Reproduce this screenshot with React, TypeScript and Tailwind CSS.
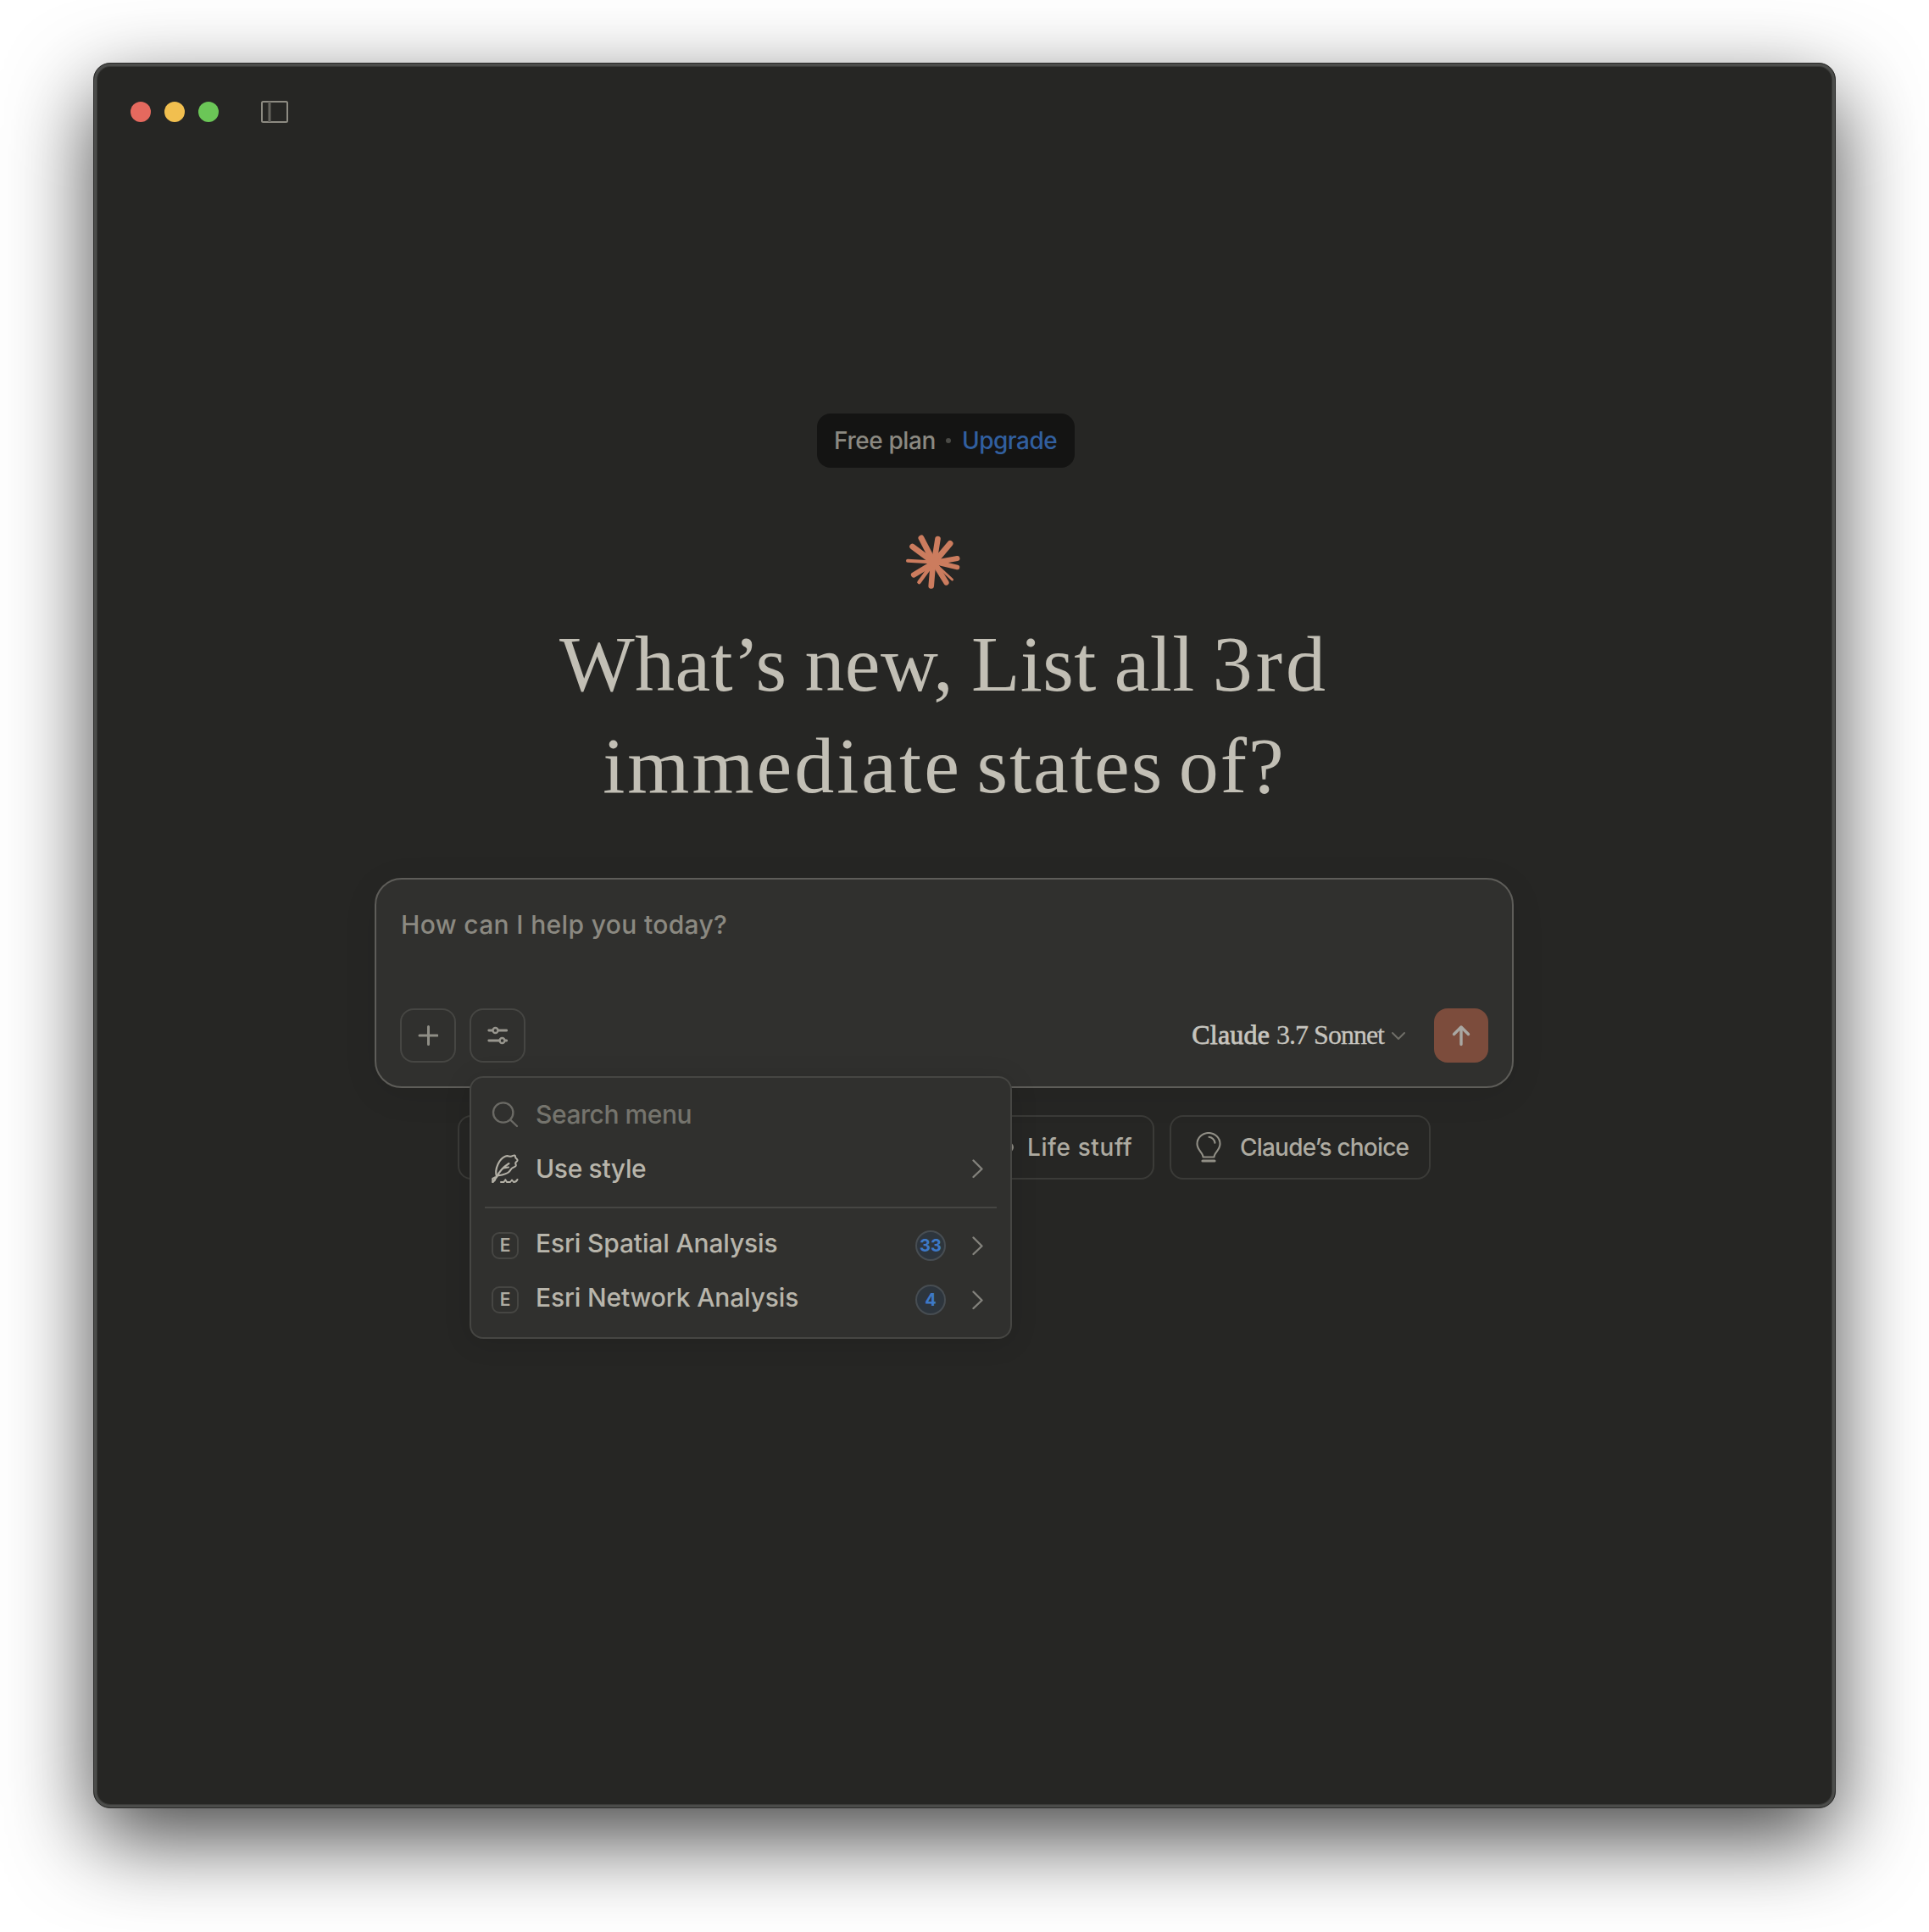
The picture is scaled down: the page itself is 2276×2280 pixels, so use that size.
import React from "react";

const sans = "font-['Inter',sans-serif]";
const serif = "font-['Liberation_Serif',serif]";

function SidebarIcon() {
  return (
    <svg className="h-7 w-8" viewBox="0 0 32 28" fill="none" stroke="#8d8b82" strokeWidth="2">
      <rect x="1" y="2" width="30" height="24" rx="1.5" />
      <path d="M10 2v24" stroke="#66655f" strokeWidth="3" />
    </svg>
  );
}

function Starburst() {
  return (
    <svg className="h-[66px] w-[66px]" viewBox="0 0 66 66" stroke="#cc7c5e" strokeLinecap="round">
      <path d="M34 34L19 5" strokeWidth="7" />
      <path d="M34 34L38.5 6" strokeWidth="6.6" />
      <path d="M34 34L53 11.500" strokeWidth="7" />
      <path d="M34 34L61.500 29" strokeWidth="6" />
      <path d="M34 33L61.500 39.500" strokeWidth="5.500" />
      <path d="M34 34L55.500 54" strokeWidth="3" />
      <path d="M34 34L48.500 57.500" strokeWidth="6.200" />
      <path d="M33 34L30.700 61.500" strokeWidth="6.600" />
      <path d="M34 33L16.500 57" strokeWidth="4.600" />
      <path d="M34 34L10 48.500" strokeWidth="6.200" />
      <path d="M34 33.500L3 31.800" strokeWidth="4" />
      <path d="M34 34L8.500 15" strokeWidth="6.600" />
      <circle cx="34" cy="33.500" r="6" fill="#cc7c5e" />
    </svg>
  );
}

function PlusIcon() {
  return (
    <svg className="h-6 w-6" viewBox="0 0 24 24" stroke="#8f8e86" strokeWidth="3" strokeLinecap="round">
      <path d="M12.500 1.500v21M2 12h21" />
    </svg>
  );
}

function SlidersIcon() {
  return (
    <svg className="h-6 w-6" viewBox="0 0 24 24" fill="none" stroke="#98968e" strokeWidth="2.900" strokeLinecap="round">
      <path d="M1.800 6h4M13 6h9.700M1.800 18h12.500M21.500 18h1.200" />
      <circle cx="9.500" cy="6" r="3" strokeWidth="2.300" />
      <circle cx="17.500" cy="18" r="3" strokeWidth="2.300" />
    </svg>
  );
}

function ArrowUpIcon() {
  return (
    <svg className="h-[26px] w-6" viewBox="0 0 24 26" fill="none" stroke="#a9a7a2" strokeWidth="3.400" strokeLinecap="round" strokeLinejoin="round">
      <path d="M12 23.500V3M3.500 11.500L12 3l8.500 8.500" />
    </svg>
  );
}

function ChevronDown() {
  return (
    <svg className="h-[11px] w-[18px]" viewBox="0 0 18 11" fill="none" stroke="#6f6e68" strokeWidth="2" strokeLinecap="round" strokeLinejoin="round">
      <path d="M2 2l7 7 7-7" />
    </svg>
  );
}

function ChevronRight() {
  return (
    <svg className="h-6 w-4" viewBox="0 0 16 24" fill="none" stroke="#83827c" strokeWidth="2.400" strokeLinecap="round" strokeLinejoin="round">
      <path d="M3.500 2.500L13.500 12.500 3.500 22" />
    </svg>
  );
}

function SearchIcon() {
  return (
    <svg className="h-8 w-8" viewBox="0 0 32 32" fill="none" stroke="#6b6a65" strokeWidth="2.300" strokeLinecap="round">
      <circle cx="13.700" cy="14" r="11.700" />
      <path d="M22.300 22.600l7.700 7.400" />
    </svg>
  );
}

function QuillIcon() {
  return (
    <svg className="h-9 w-8" viewBox="0 0 32 36" fill="none" stroke="#b3b0a6" strokeWidth="2.100" strokeLinecap="round" strokeLinejoin="round">
      <path d="M1.500 34L6 28C3 18 9.500 6 16.500 3.500c2.500-1 4 .3 6 .2 2.200-.1 3.500-1.700 4.700-1.200 1.200.5.400 2 1.300 3 1.500 1.500 2.300 1.500 2 3-.4 1.500-2.300 1.800-2.300 3.300s1.200 1.700.3 3.200c-1 1.500-3 1.500-4.300 2.500-1.500 1-2 3-3.700 4.500-3 2.800-8.500 3.600-13.500 4.500" />
      <path d="M6 28C9 21.500 13.500 16.500 20.500 12M14 17.500l6-1" />
      <path d="M1.200 34v-4l3.300-1.800-.5 3.500zM11 34h3.500l1.800-2.800 1.700 2.800h4l2-2.500 2 2.500c2 0 3.700-1.200 4.500-3" strokeWidth="2" />
    </svg>
  );
}

function BulbIcon() {
  return (
    <svg className="h-9 w-[30px]" viewBox="0 0 30 36" fill="none" stroke="#918f86" strokeWidth="2.100" strokeLinecap="round" strokeLinejoin="round">
      <path d="M8.500 29.500c0-5-7-8.500-7-15.500a13.500 13 0 0 1 27 0c0 7-7 10.500-7 15.500z" />
      <path d="M15.500 5.800c4.300.6 6.300 3.200 7 7" />
      <path d="M8 34h14" strokeWidth="3.200" />
    </svg>
  );
}

function CupIcon() {
  return (
    <svg className="h-9 w-[34px]" viewBox="0 0 34 36" fill="none" stroke="#918f86" strokeWidth="2">
      <path d="M3 10h23v12a9 9 0 0 1-9 9h-5a9 9 0 0 1-9-9zM26 13h1a5 5 0 0 1 0 10h-1" />
    </svg>
  );
}

function Chip({ className, icon, children }: { className: string; icon?: React.ReactNode; children?: React.ReactNode }) {
  return (
    <div className={`flex h-[76px] shrink-0 items-center rounded-2xl border-2 border-[#3b3b38] text-[28px] font-medium whitespace-nowrap text-[#aeaba1] ${className}`}>
      {icon}
      {children}
    </div>
  );
}

function ServerRow({ name, count }: { name: string; count: number }) {
  return (
    <div className="flex h-16 items-center pr-[15px] pl-2">
      <span className="flex h-8 w-8 items-center justify-center rounded-[9px] border-2 border-[#464643] pb-0.5 text-[21px] leading-none font-semibold text-[#aeaba1]">E</span>
      <span className="-mt-1.5 ml-[20px] flex-1 text-[30px] font-medium tracking-[-0.15px] text-[#b8b5ab]">{name}</span>
      <span className="flex h-9 w-9 items-center justify-center rounded-full border-2 border-[#474d52] bg-[#2d353d] pb-px text-[20px] leading-none font-bold text-[#3d79c7]">{count}</span>
      <span className="ml-[29px]"><ChevronRight /></span>
    </div>
  );
}

function ToolsMenu() {
  return (
    <div className="absolute top-[78px] -left-0.5 z-10 flex h-[310px] w-[640px] flex-col rounded-2xl border-2 border-[#464643] bg-[#30302e] px-4 pt-[11px] shadow-[0_4px_32px_rgba(0,0,0,0.12)]">
      <div className="flex h-16 items-center pl-2">
        <SearchIcon />
        <span className="ml-[20px] text-[30px] font-medium tracking-[-0.45px] text-[#75746d]">Search menu</span>
      </div>
      <div className="flex h-16 items-center pr-[15px] pl-2">
        <QuillIcon />
        <span className="ml-[20px] flex-1 text-[30px] font-medium tracking-[-0.35px] text-[#b8b5ab]">Use style</span>
        <ChevronRight />
      </div>
      <div className="mt-[13px] mb-[12px] h-0.5 shrink-0 bg-[#464643]" />
      <ServerRow name="Esri Spatial Analysis" count={33} />
      <ServerRow name="Esri Network Analysis" count={4} />
    </div>
  );
}

function Composer() {
  return (
    <div className="relative z-10 flex h-[248px] w-[1344px] flex-col justify-between rounded-[32px] border-2 border-[#5e5d59] bg-[#30302e] px-7 pt-[31px] pb-7 shadow-[0_8px_40px_rgba(0,0,0,0.08)]">
      <div className="pl-px text-[30px] leading-[44px] font-medium tracking-[0.35px] text-[#8b8981]">How can I help you today?</div>
      <div className="flex items-center">
        <div className="flex h-16 w-[66px] items-center justify-center rounded-2xl border-2 border-[#464643]"><PlusIcon /></div>
        <div className="relative ml-4 flex h-16 w-[66px] items-center justify-center rounded-2xl border-2 border-[#464643]">
          <SlidersIcon />
          <ToolsMenu />
        </div>
        <div className={`ml-auto flex items-center text-[32px] text-[#c6c4be] ${serif}`}>
          <span className="mb-0.5 tracking-[0.2px] [-webkit-text-stroke:0.8px_#c6c4be]">Claude</span>
          <span className="mb-0.5 ml-[8px] tracking-[-1px] [-webkit-text-stroke:0.3px_#c6c4be]">3.7 Sonnet</span>
          <span className="ml-2"><ChevronDown /></span>
        </div>
        <div className="ml-[33px] flex h-16 w-16 items-center justify-center rounded-2xl bg-[#7c4c3c]"><ArrowUpIcon /></div>
      </div>
    </div>
  );
}

export default function App() {
  return (
    <div className={`h-[2280px] w-[2276px] overflow-hidden bg-white pt-[74px] pl-[110px] ${sans}`}>
      <div className="flex h-[2060px] w-[2056px] flex-col rounded-[20px] border border-[#2b2b2a] bg-[#262624] shadow-[inset_0_0_0_3px_#4b4c4a,inset_0_0_0_4px_#3a3a38,0_36px_100px_rgba(0,0,0,0.72)]">
        <div className="flex h-[114px] items-center gap-4 pl-[43px]">
          <span className="h-6 w-6 rounded-full bg-[#e5695e]" />
          <span className="h-6 w-6 rounded-full bg-[#f1bf4f]" />
          <span className="h-6 w-6 rounded-full bg-[#6bc657]" />
          <span className="ml-[34px]"><SidebarIcon /></span>
        </div>
        <div className="ml-[331px] flex w-[1344px] flex-col items-center self-start pt-[299px]">
          <div className="ml-[4px] flex h-16 w-[304px] items-center rounded-2xl bg-[#141413] pl-[20px] text-[28px] font-medium">
            <span className="tracking-[-0.4px] text-[#8b8981]">Free plan</span>
            <span className="ml-[12px] h-1.5 w-1.5 rounded-full bg-[#4a4a46]" />
            <span className="ml-[13px] tracking-[-0.5px] text-[#315f9f]">Upgrade</span>
          </div>
          <div className="mt-[78px] -ml-[26px]"><Starburst /></div>
          <h1 className={`mt-[27px] text-center text-[94px] leading-[120px] text-[#c2bfb5] ${serif}`}>
            <span className="block tracking-[0.4px] [word-spacing:-3px]">
              What’s new, List all <span className="tracking-[4px]">3rd</span>
            </span>
            <span className="block tracking-[2px] [word-spacing:-8px]">
              <span className="tracking-[3px]">immediate</span> states of?
            </span>
          </h1>
          <div className="mt-[73px]"><Composer /></div>
          <div className="mt-[32px] flex gap-[18px]">
            <Chip className="w-[176px]" />
            <Chip className="w-[178px]" />
            <Chip className="w-[181px]" />
            <Chip className="w-[233px] pl-[32px] tracking-[0.6px]" icon={<CupIcon />}>
              <span className="ml-[15px]">Life stuff</span>
            </Chip>
            <Chip className="w-[308px] pl-[29px] tracking-[-0.8px]" icon={<BulbIcon />}>
              <span className="ml-[22px]">Claude’s choice</span>
            </Chip>
          </div>
        </div>
      </div>
    </div>
  );
}
